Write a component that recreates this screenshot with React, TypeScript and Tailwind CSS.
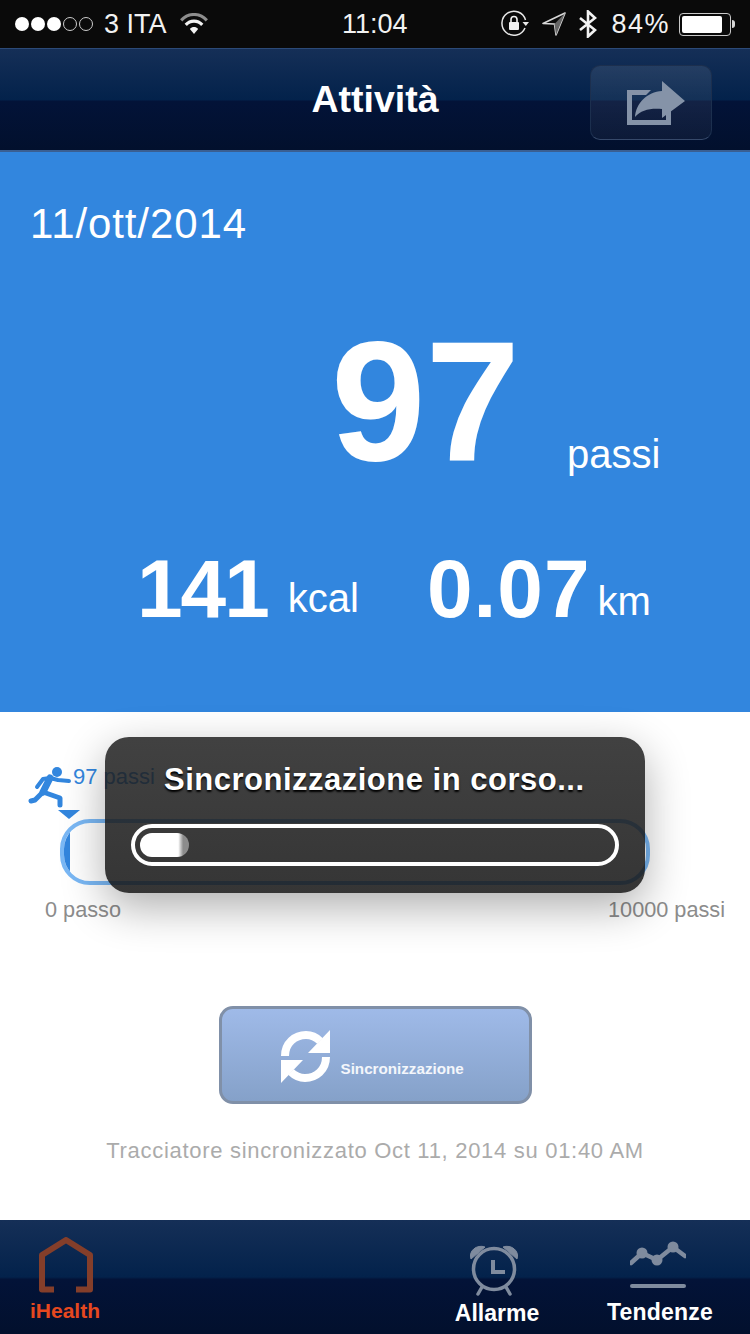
const font = { fontFamily: '"Liberation Sans", Arial, sans-serif' }

function NavGradient({ className, children }: { className: string; children: React.ReactNode }) {
  return (
    <div className={`bg-[linear-gradient(to_bottom,#152f57_0%,#03224b_50%,#031338_52%,#02102d_100%)] ${className}`}>
      {children}
    </div>
  )
}

function StatusBar() {
  return (
    <div className="flex h-[48px] items-center justify-between bg-[#0a0a0a] pl-[15px] pr-[15px] text-[27px] text-[#f2f2f2]">
      <div className="flex w-[300px] items-center">
        <div className="flex items-center gap-[2px]">
          {[0, 1, 2].map(i => (
            <span key={i} className="h-[14px] w-[14px] rounded-full bg-white" />
          ))}
          {[3, 4].map(i => (
            <span key={i} className="h-[14px] w-[14px] rounded-full border border-[#cccccc]" />
          ))}
        </div>
        <span className="ml-[11px] leading-none">3 ITA</span>
        <svg width="28" height="22" viewBox="0 0 30 24" className="ml-[13px]" fill="none">
          <path d="M1 8C9 -0.5 21 -0.5 29 8" stroke="#8d8d8d" strokeWidth="3.4" />
          <path d="M6 13c5-5.500 13-5.500 18 0" stroke="#f2f2f2" strokeWidth="3.4" />
          <path d="M10.500 17.500c2.500-2.800 6.500-2.800 9 0L15 23z" fill="#f2f2f2" />
        </svg>
      </div>
      <span className="absolute left-[342px] leading-none">11:04</span>
      <div className="flex items-center">
        <svg width="28" height="28" viewBox="0 0 28 28" fill="none">
          <path d="M24 18A12 12 0 1 1 24.500 10" stroke="#e8e8e8" strokeWidth="1.5" />
          <path d="M21.500 12h6.500l-3.200 4z" fill="#e8e8e8" />
          <rect x="8" y="12" width="10" height="8" rx="1" fill="#f2f2f2" />
          <path d="M10 12V9.500a3 3 0 0 1 6 0V12" stroke="#f2f2f2" strokeWidth="1.6" />
        </svg>
        <svg width="24" height="24" viewBox="0 0 24 24" fill="none" className="ml-[13px]">
          <path d="M23 1L1 11.500 12.500 12 14 23z" stroke="#d8d8d8" strokeWidth="1.6" strokeLinejoin="round" />
          <path d="M23 1L12.500 12 14 23z" fill="#666666" />
        </svg>
        <svg width="20" height="28" viewBox="0 0 20 28" fill="none" className="ml-[12px]">
          <path d="M2 8l15 12-7 6.500V1.500L17 8 2 20" stroke="#f2f2f2" strokeWidth="2.600" />
        </svg>
        <span className="ml-[13px] leading-none tracking-[1.5px]">84%</span>
        <div className="ml-[9px] flex items-center">
          <div className="h-[23px] w-[52px] rounded-[4px] border border-[#c8c8c8] p-[2px]">
            <div className="h-full w-[40px] rounded-[2px] bg-white" />
          </div>
          <div className="ml-[1px] h-[8px] w-[3px] rounded-r-full bg-[#d8d8d8]" />
        </div>
      </div>
    </div>
  )
}

function NavBar() {
  return (
    <NavGradient className="relative flex h-[104px] items-center justify-center border-t border-b-2 border-t-[#2c4a78] border-b-[#3a5f92]">
      <h1 className="text-[37.500px] font-bold leading-none text-white">Attività</h1>
      <button className="absolute left-[590px] top-[16px] flex h-[75px] w-[122px] items-center justify-center rounded-[10px] border border-[#1c2f4e] border-b-[#36496a] bg-[linear-gradient(to_bottom,rgba(255,255,255,0.09),rgba(255,255,255,0.04))] pl-[10px]">
        <svg width="58" height="44" viewBox="0 0 58 44" fill="#8593a8">
          <path d="M0 9h24l-5 5H5v25h34v-8l5-3v16H0z" />
          <path d="M8 36C9 22 20 11 35 10V0l23 20-23 17v-9C23 27 14 29 8 36z" />
        </svg>
      </button>
    </NavGradient>
  )
}

function Summary() {
  return (
    <section className="h-[560px] bg-[#3286de] text-white">
      <p className="pl-[30px] pt-[48px] text-[42px] leading-[48px] tracking-[0.9px]">11/ott/2014</p>
      <div className="mt-[91px] flex items-baseline pl-[331px]">
        <span className="text-[170px] font-bold leading-[124px]">97</span>
        <span className="ml-[47px] translate-y-[8px] text-[40px] leading-none">passi</span>
      </div>
      <div className="mt-[93px] flex items-baseline pl-[137px]">
        <span className="text-[82px] font-bold leading-[60px] tracking-[-2px]">141</span>
        <span className="ml-[20px] -translate-y-[5px] text-[40px] leading-none">kcal</span>
        <span className="ml-[68px] text-[82px] font-bold leading-[60px] tracking-[1px]">0.07</span>
        <span className="ml-[7px] -translate-y-[2px] text-[40px] leading-none">km</span>
      </div>
    </section>
  )
}

function RunnerIcon() {
  return (
    <svg width="46" height="42" viewBox="0 0 46 42" fill="none" stroke="#3286de" strokeLinecap="round" strokeLinejoin="round">
      <circle cx="29" cy="5" r="5" fill="#3286de" stroke="none" />
      <path d="M22 11L15 25" strokeWidth="7" />
      <path d="M22 11l8 2 11 1M22 11l-7 1-6 8" strokeWidth="4" />
      <path d="M15 25l17 6v7M15 25l-8 8-4 1" strokeWidth="5" />
    </svg>
  )
}

function StepProgress() {
  return (
    <div className="relative h-[508px] bg-white">
      <div className="absolute left-[28px] top-[55px]">
        <RunnerIcon />
      </div>
      <div className="pl-[73px] pt-[54px] text-[22px] leading-[22px] text-[#3286de]">97 passi</div>
      <div className="ml-[58px] mt-[22px] h-0 w-0 border-x-[11px] border-t-[9px] border-x-transparent border-t-[#3286de]" />
      <div className="ml-[60px] mr-[100px] h-[66px] overflow-hidden rounded-[30px] border-[4px] border-[#7ab8f5]">
        <div className="h-full w-[6px] bg-[#3286de]" />
      </div>
      <div className="mt-[13px] flex justify-between pl-[45px] pr-[25px] text-[21.700px] leading-[24px] text-[#8c8c8c]">
        <span>0 passo</span>
        <span>10000 passi</span>
      </div>

      <button className="mx-auto mt-[84px] flex h-[98px] w-[313px] items-center rounded-[14px] border-[3px] border-[#8090a8] bg-[linear-gradient(to_bottom,#9fbae8,#85a1c9)] pl-[58px] pt-[2px]">
        <svg width="51" height="55" viewBox="0 0 51 55" fill="none" stroke="#ffffff" strokeWidth="8">
          <path d="M5 27C5 14 15 6 26 6c5 0 10 2 14 6" />
          <path d="M46 28C46 41 36 49 25 49c-5 0-10-2-14-6" />
          <path d="M50 1v23H28zM1 54V31h22z" fill="#ffffff" stroke="none" />
        </svg>
        <span className="ml-[10px] mt-[27px] text-[15.200px] font-bold text-white/90">Sincronizzazione</span>
      </button>
      <p className="mt-[35px] text-center text-[22px] leading-[24px] tracking-[0.7px] text-[#ababab]">
        Tracciatore sincronizzato Oct 11, 2014 su 01:40 AM
      </p>

      {/* HUD di sincronizzazione */}
      <div className="absolute left-[105px] top-[25px] flex h-[156px] w-[540px] flex-col rounded-[24px] bg-[linear-gradient(to_bottom,rgba(34,34,34,0.86),rgba(20,20,20,0.86))] pl-[26px] shadow-[0_14px_44px_rgba(0,0,0,0.32)]">
        <p className="pl-[33px] pt-[25px] text-[31px] font-bold leading-[36px] tracking-[0.5px] text-white [text-shadow:0_2px_2px_#000]">
          Sincronizzazione in corso...
        </p>
        <div className="mt-[26px] h-[42px] w-[488px] rounded-[21px] border-[4px] border-white p-[5px]">
          <div className="h-full w-[49px] rounded-full bg-[linear-gradient(to_right,#ffffff_78%,#8c8c8c_88%)]" />
        </div>
      </div>
    </div>
  )
}

function TabBar() {
  return (
    <NavGradient className="relative h-[114px] text-[23px] font-bold leading-none text-white">
      <div className="absolute left-[30px] top-[17px] flex w-[70px] flex-col items-center">
        <svg width="54" height="56" viewBox="0 0 54 56" fill="none" className="ml-[2px]">
          <path d="M15 52.500H3V18L27 3l24 15v34.500H37" stroke="#843e2a" strokeWidth="6" strokeLinejoin="round" />
        </svg>
        <span className="mt-[7px] text-[21px] text-[#e5481f]">iHealth</span>
      </div>
      <div className="absolute left-[455px] top-[25px] flex w-[84px] flex-col items-center">
        <svg width="52" height="52" viewBox="0 0 52 52" fill="none" stroke="#7f8b9e" className="mr-[4px]">
          <circle cx="25" cy="24" r="20.500" strokeWidth="3.500" />
          <path d="M24 15v12h12" strokeWidth="4" />
          <path d="M2 14C-1 6 8-1 16 2zM48 14c3-8-6-15-14-12z" fill="#7f8b9e" strokeWidth="1" strokeLinejoin="round" />
          <path d="M13 42l-4 7M37 42l4 7" strokeWidth="3.500" strokeLinecap="round" />
        </svg>
        <span className="mt-[5px]">Allarme</span>
      </div>
      <div className="absolute left-[607px] top-[21px] flex w-[106px] flex-col items-center">
        <svg width="56" height="48" viewBox="0 0 56 48" fill="#7f8b9e" className="mr-[4px]">
          <path d="M1 22l11-10 15 7L43 6l12 9" fill="none" stroke="#7f8b9e" strokeWidth="4.500" strokeLinecap="round" strokeLinejoin="round" />
          <circle cx="12" cy="12" r="5.500" />
          <circle cx="27" cy="19" r="5.500" />
          <circle cx="43" cy="6" r="5.500" />
          <rect x="0" y="43" width="56" height="4" rx="2" />
        </svg>
        <span className="mt-[12px] tracking-[0.2px]">Tendenze</span>
      </div>
    </NavGradient>
  )
}

export default function App() {
  return (
    <div className="relative h-[1334px] w-[750px] overflow-hidden bg-white" style={font}>
      <StatusBar />
      <NavBar />
      <Summary />
      <StepProgress />
      <TabBar />
    </div>
  )
}
